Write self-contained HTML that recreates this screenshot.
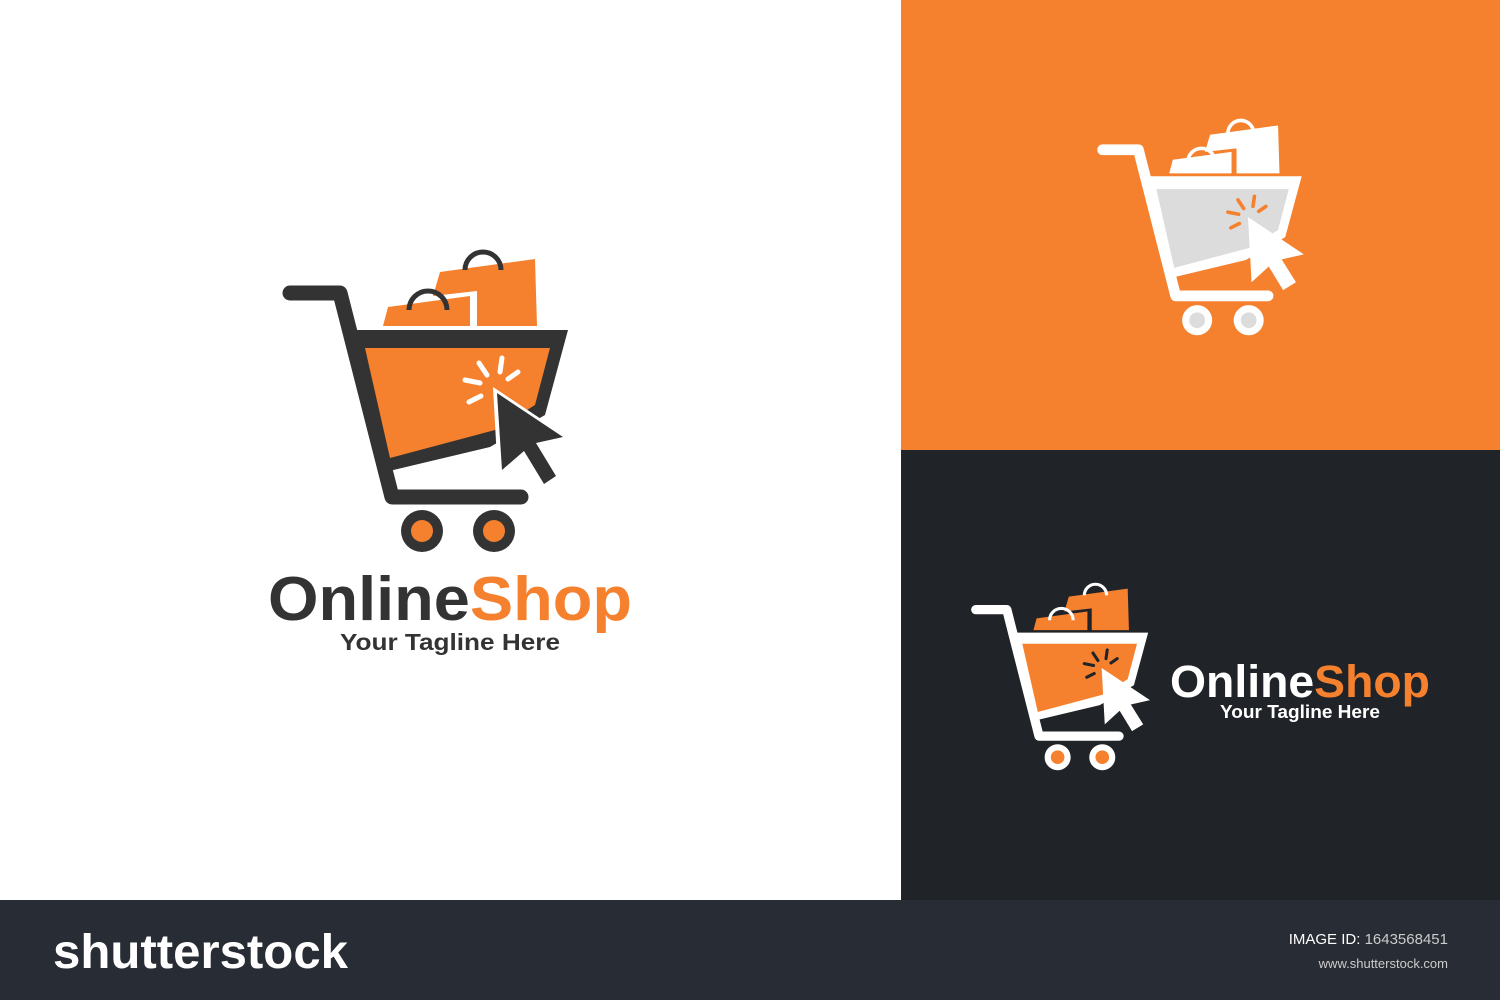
<!DOCTYPE html>
<html><head><meta charset="utf-8"><style>
body{margin:0;width:1500px;height:1000px;position:relative;overflow:hidden;background:#fff;font-family:"Liberation Sans",sans-serif}
.p{position:absolute}
</style></head><body>
<div class="p" style="left:901px;top:0;width:599px;height:450px;background:#f5812f"></div>
<div class="p" style="left:901px;top:450px;width:599px;height:450px;background:#202327"></div>
<div class="p" style="left:0;top:900px;width:1500px;height:100px;background:#282c34"></div>
<svg class="p" style="left:0;top:0" width="1500" height="1000" viewBox="0 0 1500 1000">
<defs>
<g id="cart">
 <path d="M383,326 L388,307 L470,296 L470,326Z" fill="var(--bag)"/>
 <path d="M440,272 L535,259 L537,326 L477,326 L477,291 L433,296Z" fill="var(--bag)"/>
 <path d="M409,310 A19,19 0 0 1 447,310" fill="none" stroke="var(--frame)" stroke-width="5"/>
 <path d="M465,270 A18,18 0 0 1 501,270" fill="none" stroke="var(--frame)" stroke-width="5"/>
 <path d="M350,330 L568,330 L545,415 L490,447 L385,472 Z" fill="var(--frame)"/>
 <path d="M365,348 L550,348 L535,405 L495,430 L390,458 Z" fill="var(--fill)"/>
 <path d="M290,293 L340,293 L392,497 L521,497" fill="none" stroke="var(--frame)" stroke-width="15" stroke-linecap="round" stroke-linejoin="round"/>
 <circle cx="422" cy="531" r="21" fill="var(--frame)"/><circle cx="422" cy="531" r="11" fill="var(--wheel)"/>
 <circle cx="494" cy="531" r="21" fill="var(--frame)"/><circle cx="494" cy="531" r="11" fill="var(--wheel)"/>
 <path d="M493,387 L571,439 L540,446 L560,478 L542,489 L522,456 L498,478 Z" fill="var(--cout)"/>
 <path d="M497,393 L563,437 L536,443 L556,476 L544,484 L524,451 L502,470 Z" fill="var(--cur)"/>
 <g stroke="var(--ray)" stroke-width="5" stroke-linecap="round">
  <line x1="465" y1="380" x2="480" y2="383"/><line x1="479" y1="363" x2="487" y2="375"/>
  <line x1="502" y1="358" x2="500" y2="372"/><line x1="518" y1="372" x2="508" y2="379"/>
  <line x1="469" y1="402" x2="481" y2="396"/>
 </g>
</g>
</defs>
<use href="#cart" style="--bag:#f5812f;--frame:#333;--fill:#f5812f;--wheel:#f5812f;--cout:#fff;--cur:#333;--ray:#fff"/>
<use href="#cart" transform="translate(895,-60) scale(0.716)" style="--bag:#fff;--frame:#fff;--fill:#dcdcdc;--wheel:#dcdcdc;--cout:#fff;--cur:#fff;--ray:#f5812f"/>
<use href="#cart" transform="translate(796,428) scale(0.62)" style="--bag:#f5812f;--frame:#fff;--fill:#f5812f;--wheel:#f5812f;--cout:#fff;--cur:#fff;--ray:#202327"/>
<text x="268" y="620" font-size="62" font-weight="bold" textLength="364" lengthAdjust="spacingAndGlyphs" font-family="Liberation Sans,sans-serif"><tspan fill="#333">Online</tspan><tspan fill="#f5812f">Shop</tspan></text>
<text x="340" y="650" font-size="23" font-weight="bold" fill="#333" textLength="220" lengthAdjust="spacingAndGlyphs" font-family="Liberation Sans,sans-serif">Your Tagline Here</text>
<text x="1170" y="697" font-size="45" font-weight="bold" textLength="260" lengthAdjust="spacingAndGlyphs" font-family="Liberation Sans,sans-serif"><tspan fill="#fff">Online</tspan><tspan fill="#f5812f">Shop</tspan></text>
<text x="1220" y="718" font-size="18" font-weight="bold" fill="#fff" textLength="160" lengthAdjust="spacingAndGlyphs" font-family="Liberation Sans,sans-serif">Your Tagline Here</text>
<text x="53" y="968" font-size="48" font-weight="bold" fill="#fff" textLength="295" lengthAdjust="spacingAndGlyphs" font-family="Liberation Sans,sans-serif">shutterstock</text>
<text x="1448" y="944" font-size="15" fill="#fff" text-anchor="end" font-family="Liberation Sans,sans-serif">IMAGE ID: <tspan fill="#ccc">1643568451</tspan></text>
<text x="1448" y="968" font-size="13" fill="#ccc" text-anchor="end" font-family="Liberation Sans,sans-serif">www.shutterstock.com</text>
</svg>
</body></html>
